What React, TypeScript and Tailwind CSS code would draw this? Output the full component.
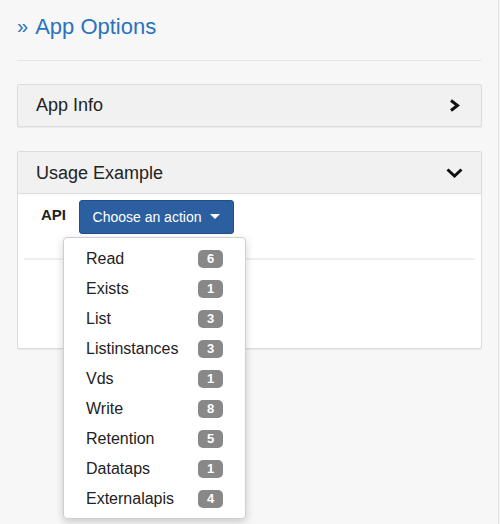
import React from "react";

const items: [string, number][] = [
  ["Read", 6],
  ["Exists", 1],
  ["List", 3],
  ["Listinstances", 3],
  ["Vds", 1],
  ["Write", 8],
  ["Retention", 5],
  ["Datataps", 1],
  ["Externalapis", 4],
];

function ChevronRight() {
  return (
    <svg width="12" height="13" viewBox="0 0 12 13" className="block">
      <polyline points="2,1.5 8.5,6.5 2,11.5" fill="none" stroke="#111" strokeWidth="3" strokeLinejoin="miter" />
    </svg>
  );
}

function ChevronDown() {
  return (
    <svg width="17" height="10" viewBox="0 0 17 10" className="block">
      <polyline points="1.5,1.5 8.5,8 15.5,1.5" fill="none" stroke="#111" strokeWidth="3" strokeLinejoin="miter" />
    </svg>
  );
}

export default function App() {
  return (
    <div
      className="w-[500px] h-[524px] bg-[#f7f7f7] flex overflow-hidden text-[#222]"
      style={{ fontFamily: '"Liberation Sans", Arial, sans-serif' }}
    >
      <div className="flex-1 pl-[17px] pr-[16px] pt-[12px]">
        <div className="flex items-center h-[28px] text-[22px] text-[#2a73bd]">
          <span className="mr-[7px] text-[20px] leading-none">»</span>
          <span>App Options</span>
        </div>
        <div className="mt-[20px] h-px bg-[#e6e6e6]" />

        <div className="mt-[23px] h-[43px] bg-[#f1f1f1] border border-[#dcdcdc] rounded-[2px] shadow-[0_1px_1px_rgba(0,0,0,0.06)] flex items-center justify-between pl-[18px] pr-[20px]">
          <span className="text-[18px]">App Info</span>
          <ChevronRight />
        </div>

        <div className="mt-[24px] border border-[#dcdcdc] rounded-[2px] bg-white shadow-[0_1px_1px_rgba(0,0,0,0.06)]">
          <div className="h-[42px] bg-[#f1f1f1] border-b border-[#dcdcdc] flex items-center justify-between pl-[18px] pr-[18px]">
            <span className="text-[18px] mt-[1px]">Usage Example</span>
            <ChevronDown />
          </div>
          <div className="relative h-[154px] px-[6px]">
            <div className="flex items-start pt-[6px] pl-[17px]">
              <span className="text-[15px] font-bold mt-[4px] w-[38px]">API</span>
              <div className="h-[34px] w-[155px] bg-[#2b5f9f] border border-[#214f8a] rounded-[3px] flex items-center justify-center text-white text-[14px]">
                <span>Choose an action</span>
                <svg width="10" height="6" viewBox="0 0 10 6" className="ml-[9px]">
                  <polygon points="0,0 10,0 5,5" fill="#fff" />
                </svg>
              </div>
            </div>
            <div className="mt-[24px] h-[2px] bg-[#f0f0f0]" />

            <div className="absolute left-[45px] top-[43px] w-[183px] bg-white border border-[#cfcfcf] rounded-[4px] shadow-[0_3px_8px_rgba(0,0,0,0.18)] pt-[6px] pb-[4px] z-10">
              {items.map(([name, n]) => (
                <div key={name} className="h-[30px] flex items-center justify-between pl-[22px] pr-[22px]">
                  <span className="text-[16px] text-[#222]">{name}</span>
                  <span className="w-[25px] h-[18px] rounded-[5px] bg-[#888888] text-white text-[13px] font-bold flex items-center justify-center">
                    {n}
                  </span>
                </div>
              ))}
            </div>
          </div>
        </div>
      </div>
      <div className="w-[2px] border-l border-[#e4e4e4] bg-[#f3f3f3]" />
    </div>
  );
}
